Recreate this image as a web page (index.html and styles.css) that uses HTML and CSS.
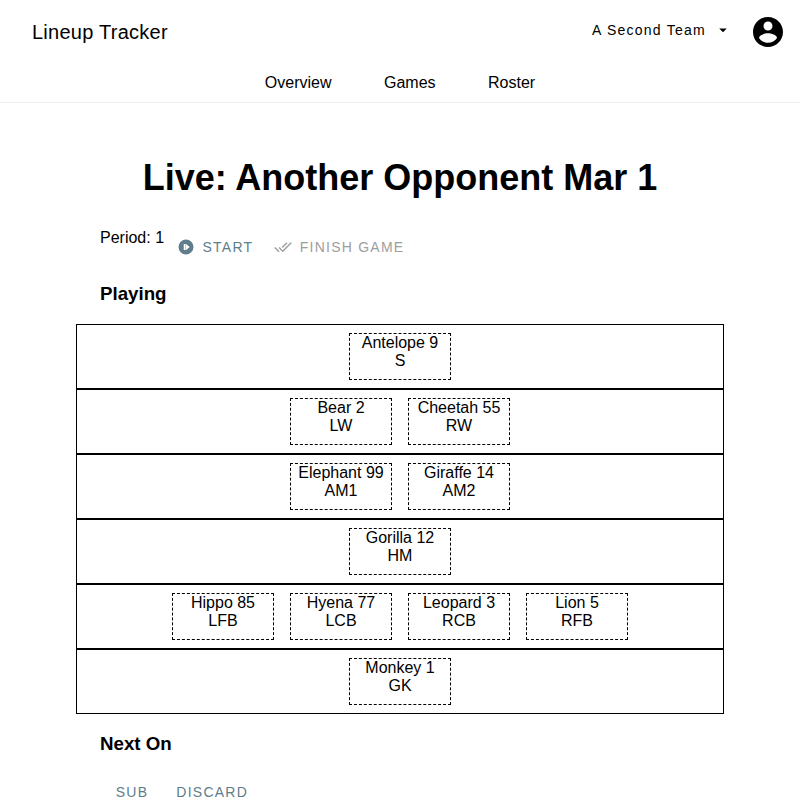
FILE: index.html
```html
<!DOCTYPE html>
<html lang="en">
<head>
<meta charset="utf-8">
<title>Lineup Tracker</title>
<link rel="stylesheet" href="styles.css">
</head>
<body>
<header class="app-header">
  <div class="toolbar">
    <div class="app-title">Lineup Tracker</div>
    <button class="team-button"><span>A Second Team</span>
      <svg class="caret" viewBox="0 0 24 24"><path d="M7 10l5 5 5-5z"/></svg>
    </button>
    <button class="account" aria-label="Account"><svg viewBox="0 0 24 24"><path d="M12 2C6.48 2 2 6.48 2 12s4.480 10 10 10 10-4.480 10-10S17.520 2 12 2zm0 3c1.660 0 3 1.340 3 3s-1.340 3-3 3-3-1.340-3-3 1.340-3 3-3zm0 14.200c-2.500 0-4.710-1.280-6-3.220.030-1.990 4-3.080 6-3.080 1.990 0 5.970 1.090 6 3.080-1.290 1.940-3.500 3.220-6 3.220z"/></svg></button>
  </div>
  <nav class="tabs"><a>Overview</a><a>Games</a><a>Roster</a></nav>
</header>
<main>
  <h2 class="game-title">Live: Another Opponent Mar 1</h2>
  <div class="clock">
    <span class="period">Period: 1</span>
    <button class="action start"><svg viewBox="0 0 24 24"><path fill-rule="evenodd" d="M12 2a10 10 0 1 0 0 20 10 10 0 0 0 0-20zM9 8h2.500v8H9zM12 8l5 4-5 4z"/></svg>Start</button>
    <button class="action finish"><svg viewBox="0 0 24 24"><path d="M18 7l-1.410-1.410-6.340 6.340 1.410 1.410L18 7zm4.240-1.410L11.660 16.170 7.480 12l-1.410 1.410L11.660 19l12-12-1.420-1.410zM.410 13.410L6 19l1.410-1.410L1.830 12 .410 13.410z"/></svg>Finish Game</button>
  </div>
  <h3>Playing</h3>
  <section class="field">
    <div class="line"><div class="player">Antelope 9<br>S</div></div>
    <div class="line"><div class="player">Bear 2<br>LW</div><div class="player">Cheetah 55<br>RW</div></div>
    <div class="line"><div class="player">Elephant 99<br>AM1</div><div class="player">Giraffe 14<br>AM2</div></div>
    <div class="line"><div class="player">Gorilla 12<br>HM</div></div>
    <div class="line"><div class="player">Hippo 85<br>LFB</div><div class="player">Hyena 77<br>LCB</div><div class="player">Leopard 3<br>RCB</div><div class="player">Lion 5<br>RFB</div></div>
    <div class="line"><div class="player">Monkey 1<br>GK</div></div>
  </section>
  <h3>Next On</h3>
  <div class="next-actions"><button class="action">Sub</button><button class="action">Discard</button></div>
</main>
</body>
</html>
```
FILE: styles.css
```css
* { box-sizing: border-box; }
body {
  margin: 0;
  height: 800px;
  overflow: hidden;
  background: #fff;
  color: #000;
  font: 16px/18px "Liberation Sans", Arial, sans-serif;
}
button { border: 0; padding: 0; background: none; color: inherit; font: inherit; }
svg { display: block; fill: currentColor; }
.app-header { height: 103px; border-bottom: 1px solid #eee; }
.toolbar { display: flex; align-items: center; height: 64px; padding: 0 14px 0 32px; }
.app-title { flex: 1; font-size: 20px; line-height: 24px; letter-spacing: 0.25px; }
.team-button { display: flex; align-items: center; height: 36px; margin: 0 18px 4px 0; font-size: 14px; letter-spacing: 1.25px; }
.caret { width: 18px; height: 18px; margin-left: 8px; }
.account svg { width: 36px; height: 36px; }
.tabs { display: flex; justify-content: center; gap: 52.45px; padding-top: 10px; }
main { padding: 0 76px; }
.game-title { margin: 53px 0 0; text-align: center; font-size: 36px; line-height: 44px; }
.clock { display: flex; height: 36px; margin: 29px 24px 0; }
.period { margin-right: 12.8px; }
.action { display: flex; align-items: center; height: 36px; color: #607d8b; font-size: 14px; letter-spacing: 1.25px; text-transform: uppercase; }
.action svg { width: 18px; height: 18px; margin-right: 8px; }
.start svg { margin-right: 7.6px; }
.finish { margin-left: 20.4px; color: #9e9e9e; }
h3 { margin: 18px 24px 19px; font-size: 18.72px; line-height: 22px; }
.line { display: flex; justify-content: center; gap: 16px; height: 65px; padding: 8px 0; border: 1px solid #000; }
.player { width: 102px; height: 47px; border: 1px dashed #000; text-align: center; }
.field + h3 { margin-top: 19px; }
.next-actions { display: flex; gap: 28px; padding-left: 39.75px; }
```
